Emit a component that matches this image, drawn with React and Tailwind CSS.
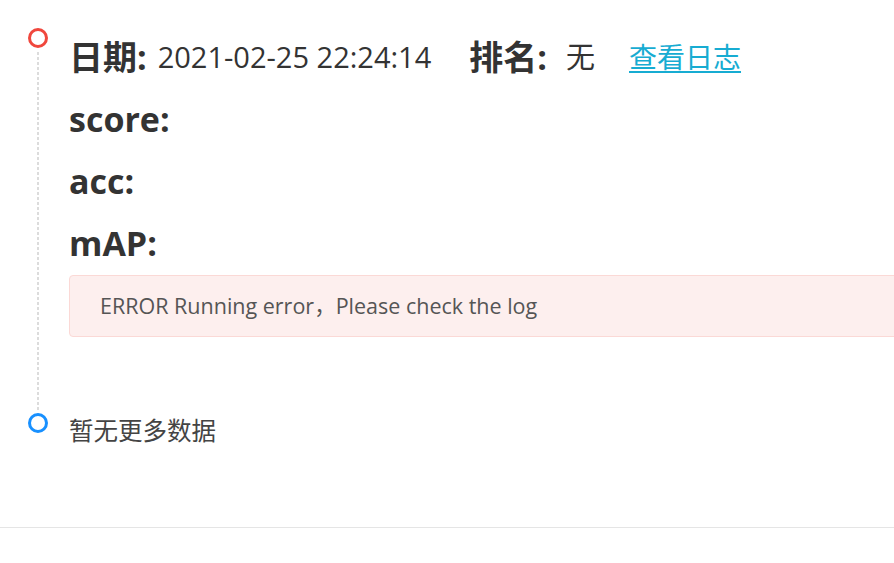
export default function App() {
  const font = { fontFamily: '"Open Sans", "Noto Sans CJK SC", sans-serif' };
  return (
    <div className="w-full h-[563px] overflow-hidden bg-white text-[#333]" style={font}>
      <div className="flex flex-col">
        {/* item 1 */}
        <div className="flex">
          <div className="w-[69px] flex flex-col items-center pt-[28px] pl-[6px] shrink-0">
            <div className="w-[20px] h-[20px] rounded-full border-[3px] border-[#f0473d] bg-white shrink-0" />
            <div className="flex-1 mt-[4px] mb-[3px] w-[2px] bg-[linear-gradient(#dcdcdc_60%,transparent_60%)] bg-[length:2px_5px]" />
          </div>
          <div className="pt-[26px] pb-[76px] w-[900px] shrink-0">
            <div className="h-[62px] flex items-center whitespace-nowrap">
              <span className="text-[34px] font-bold">日期:</span>
              <span className="text-[29px] ml-[11px]">2021-02-25 22:24:14</span>
              <span className="text-[34px] font-bold ml-[38px]">排名:</span>
              <span className="text-[29px] ml-[19px]">无</span>
              <a className="text-[28px] ml-[34px] text-[#17acd2] underline underline-offset-[3px]" href="#">查看日志</a>
            </div>
            <div className="h-[62px] flex items-center text-[34px] font-bold">score:</div>
            <div className="h-[62px] flex items-center text-[34px] font-bold">acc:</div>
            <div className="h-[62px] flex items-center text-[34px] font-bold">mAP:</div>
            <div className="mt-px h-[62px] flex items-center pl-[30px] bg-[#fdefee] border border-[#fbd9d6] rounded-[4px] text-[21.5px] text-[#555]">
              ERROR Running error，Please check the log
            </div>
          </div>
        </div>
        {/* item 2 */}
        <div className="flex">
          <div className="w-[69px] flex flex-col items-center pl-[6px] shrink-0">
            <div className="w-[20px] h-[20px] rounded-full border-[3px] border-[#1890ff] bg-white" />
          </div>
          <div className="h-[36px] flex items-center text-[24.5px] text-[#444]">暂无更多数据</div>
        </div>
      </div>
      <div className="mt-[78px] border-t border-[#e5e5e5]" />
    </div>
  );
}
